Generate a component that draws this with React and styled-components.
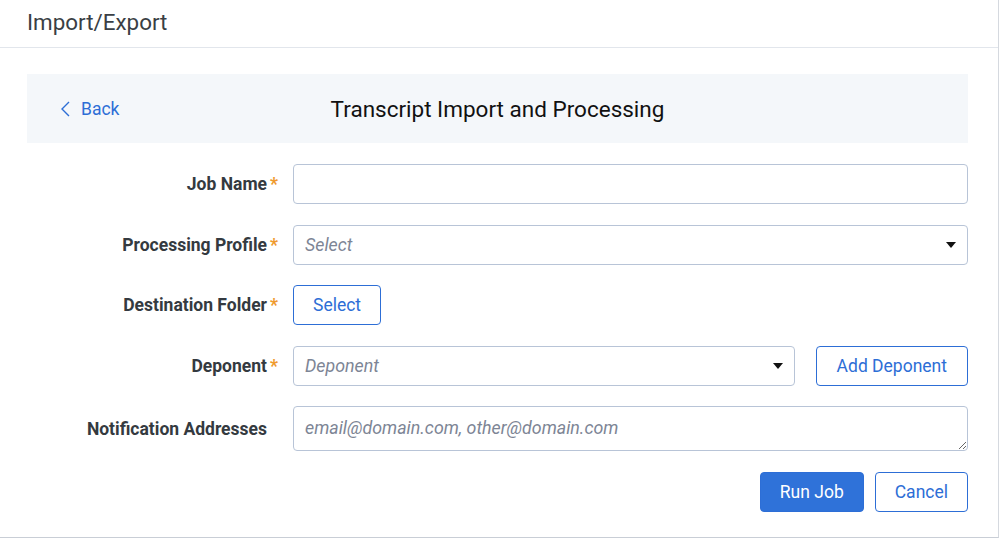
import React from "react";
import styled, { createGlobalStyle } from "styled-components";

const GlobalStyle = createGlobalStyle`
  * { box-sizing: border-box; }
  body {
    margin: 0;
    background: #ffffff;
    font-family: Roboto, "Liberation Sans", Arial, sans-serif;
  }
`;

const Page = styled.div`
  width: 999px;
  height: 538px;
  border-right: 1px solid #d5d9df;
  border-bottom: 1px solid #c9ced6;
  background: #fff;
`;

const Header = styled.header`
  height: 48px;
  display: flex;
  align-items: center;
  padding: 0 0 3px 27px;
  border-bottom: 1px solid #e2e6ec;
  font-size: 22.4px;
  color: #3a3f45;
`;

const Body = styled.main`
  padding: 26px 30px 0 27px;
`;

const Banner = styled.div`
  height: 69px;
  background: #f4f7fa;
  display: grid;
  grid-template-columns: 1fr auto 1fr;
  align-items: center;
`;

const BackLink = styled.a`
  display: flex;
  align-items: center;
  gap: 11px;
  padding-left: 34px;
  color: #2d6ed6;
  font-size: 17.5px;
  text-decoration: none;
  cursor: pointer;
`;

const Title = styled.h1`
  margin: 0;
  font-size: 22.5px;
  font-weight: 400;
  color: #111;
`;

const Form = styled.form`
  display: grid;
  grid-template-columns: 251px 1fr;
  column-gap: 15px;
  row-gap: 20.5px;
  margin-top: 21px;
  align-items: center;
`;

const Label = styled.label`
  display: flex;
  justify-content: flex-end;
  align-items: center;
  font-size: 17.5px;
  font-weight: 700;
  color: #343a40;
`;

const Star = styled.span`
  width: 11px;
  text-align: right;
  color: #ef9a2e;
  font-weight: 700;
`;

const fieldBase = `
  width: 100%;
  border: 1px solid #b8c4d7;
  border-radius: 4px;
  background: #fff;
  font-family: Roboto, "Liberation Sans", Arial, sans-serif;
  font-size: 17.8px;
  color: #333;
  padding: 0 11px;
  outline: none;
  &::placeholder {
    color: #7d8595;
    font-style: italic;
  }
`;

const TextInput = styled.input`
  ${fieldBase}
  height: 40px;
`;

const TextArea = styled.textarea`
  ${fieldBase}
  height: 45px;
  padding-top: 10px;
  resize: vertical;
  display: block;
`;

const SelectWrap = styled.div`
  position: relative;
  flex: 1;
`;

const SelectBox = styled.select`
  ${fieldBase}
  height: 40px;
  appearance: none;
  font-style: italic;
  color: #7d8595;
`;

const Caret = styled.svg`
  position: absolute;
  right: 12px;
  top: 17px;
  pointer-events: none;
`;

const Inline = styled.div`
  display: flex;
  gap: 21px;
  align-items: center;
`;

const Button = styled.button`
  height: 40px;
  padding: 0 ${(p) => p.$pad || 19}px;
  border-radius: 4px;
  border: 1px solid #2d6ed6;
  background: ${(p) => (p.$primary ? "#2f72d9" : "#fff")};
  color: ${(p) => (p.$primary ? "#fff" : "#2d6ed6")};
  font-family: Roboto, "Liberation Sans", Arial, sans-serif;
  font-size: 17.5px;
  cursor: pointer;
`;

const Actions = styled.div`
  grid-column: 1 / -1;
  display: flex;
  justify-content: flex-end;
  gap: 11px;
`;

function Select({ placeholder }) {
  return (
    <SelectWrap>
      <SelectBox defaultValue="">
        <option value="" disabled>
          {placeholder}
        </option>
      </SelectBox>
      <Caret width="10" height="6" viewBox="0 0 10 6">
        <path d="M0 0 L10 0 L5 6 Z" fill="#111" />
      </Caret>
    </SelectWrap>
  );
}

function FieldLabel({ children, required }) {
  return (
    <Label>
      {children}
      <Star>{required ? "*" : ""}</Star>
    </Label>
  );
}

export default function App() {
  return (
    <>
      <GlobalStyle />
      <Page>
        <Header>Import/Export</Header>
        <Body>
          <Banner>
            <BackLink>
              <svg width="9" height="16" viewBox="0 0 9 16">
                <path d="M8 1 L1 8 L8 15" fill="none" stroke="#2d6ed6" strokeWidth="1.4" />
              </svg>
              Back
            </BackLink>
            <Title>Transcript Import and Processing</Title>
            <div />
          </Banner>
          <Form onSubmit={(e) => e.preventDefault()}>
            <FieldLabel required>Job Name</FieldLabel>
            <TextInput />

            <FieldLabel required>Processing Profile</FieldLabel>
            <Select placeholder="Select" />

            <FieldLabel required>Destination Folder</FieldLabel>
            <div>
              <Button type="button">Select</Button>
            </div>

            <FieldLabel required>Deponent</FieldLabel>
            <Inline>
              <Select placeholder="Deponent" />
              <Button type="button" $pad={20}>
                Add Deponent
              </Button>
            </Inline>

            <FieldLabel>Notification Addresses</FieldLabel>
            <TextArea placeholder="email@domain.com, other@domain.com" />

            <Actions>
              <Button type="submit" $primary>
                Run Job
              </Button>
              <Button type="button">Cancel</Button>
            </Actions>
          </Form>
        </Body>
      </Page>
    </>
  );
}
